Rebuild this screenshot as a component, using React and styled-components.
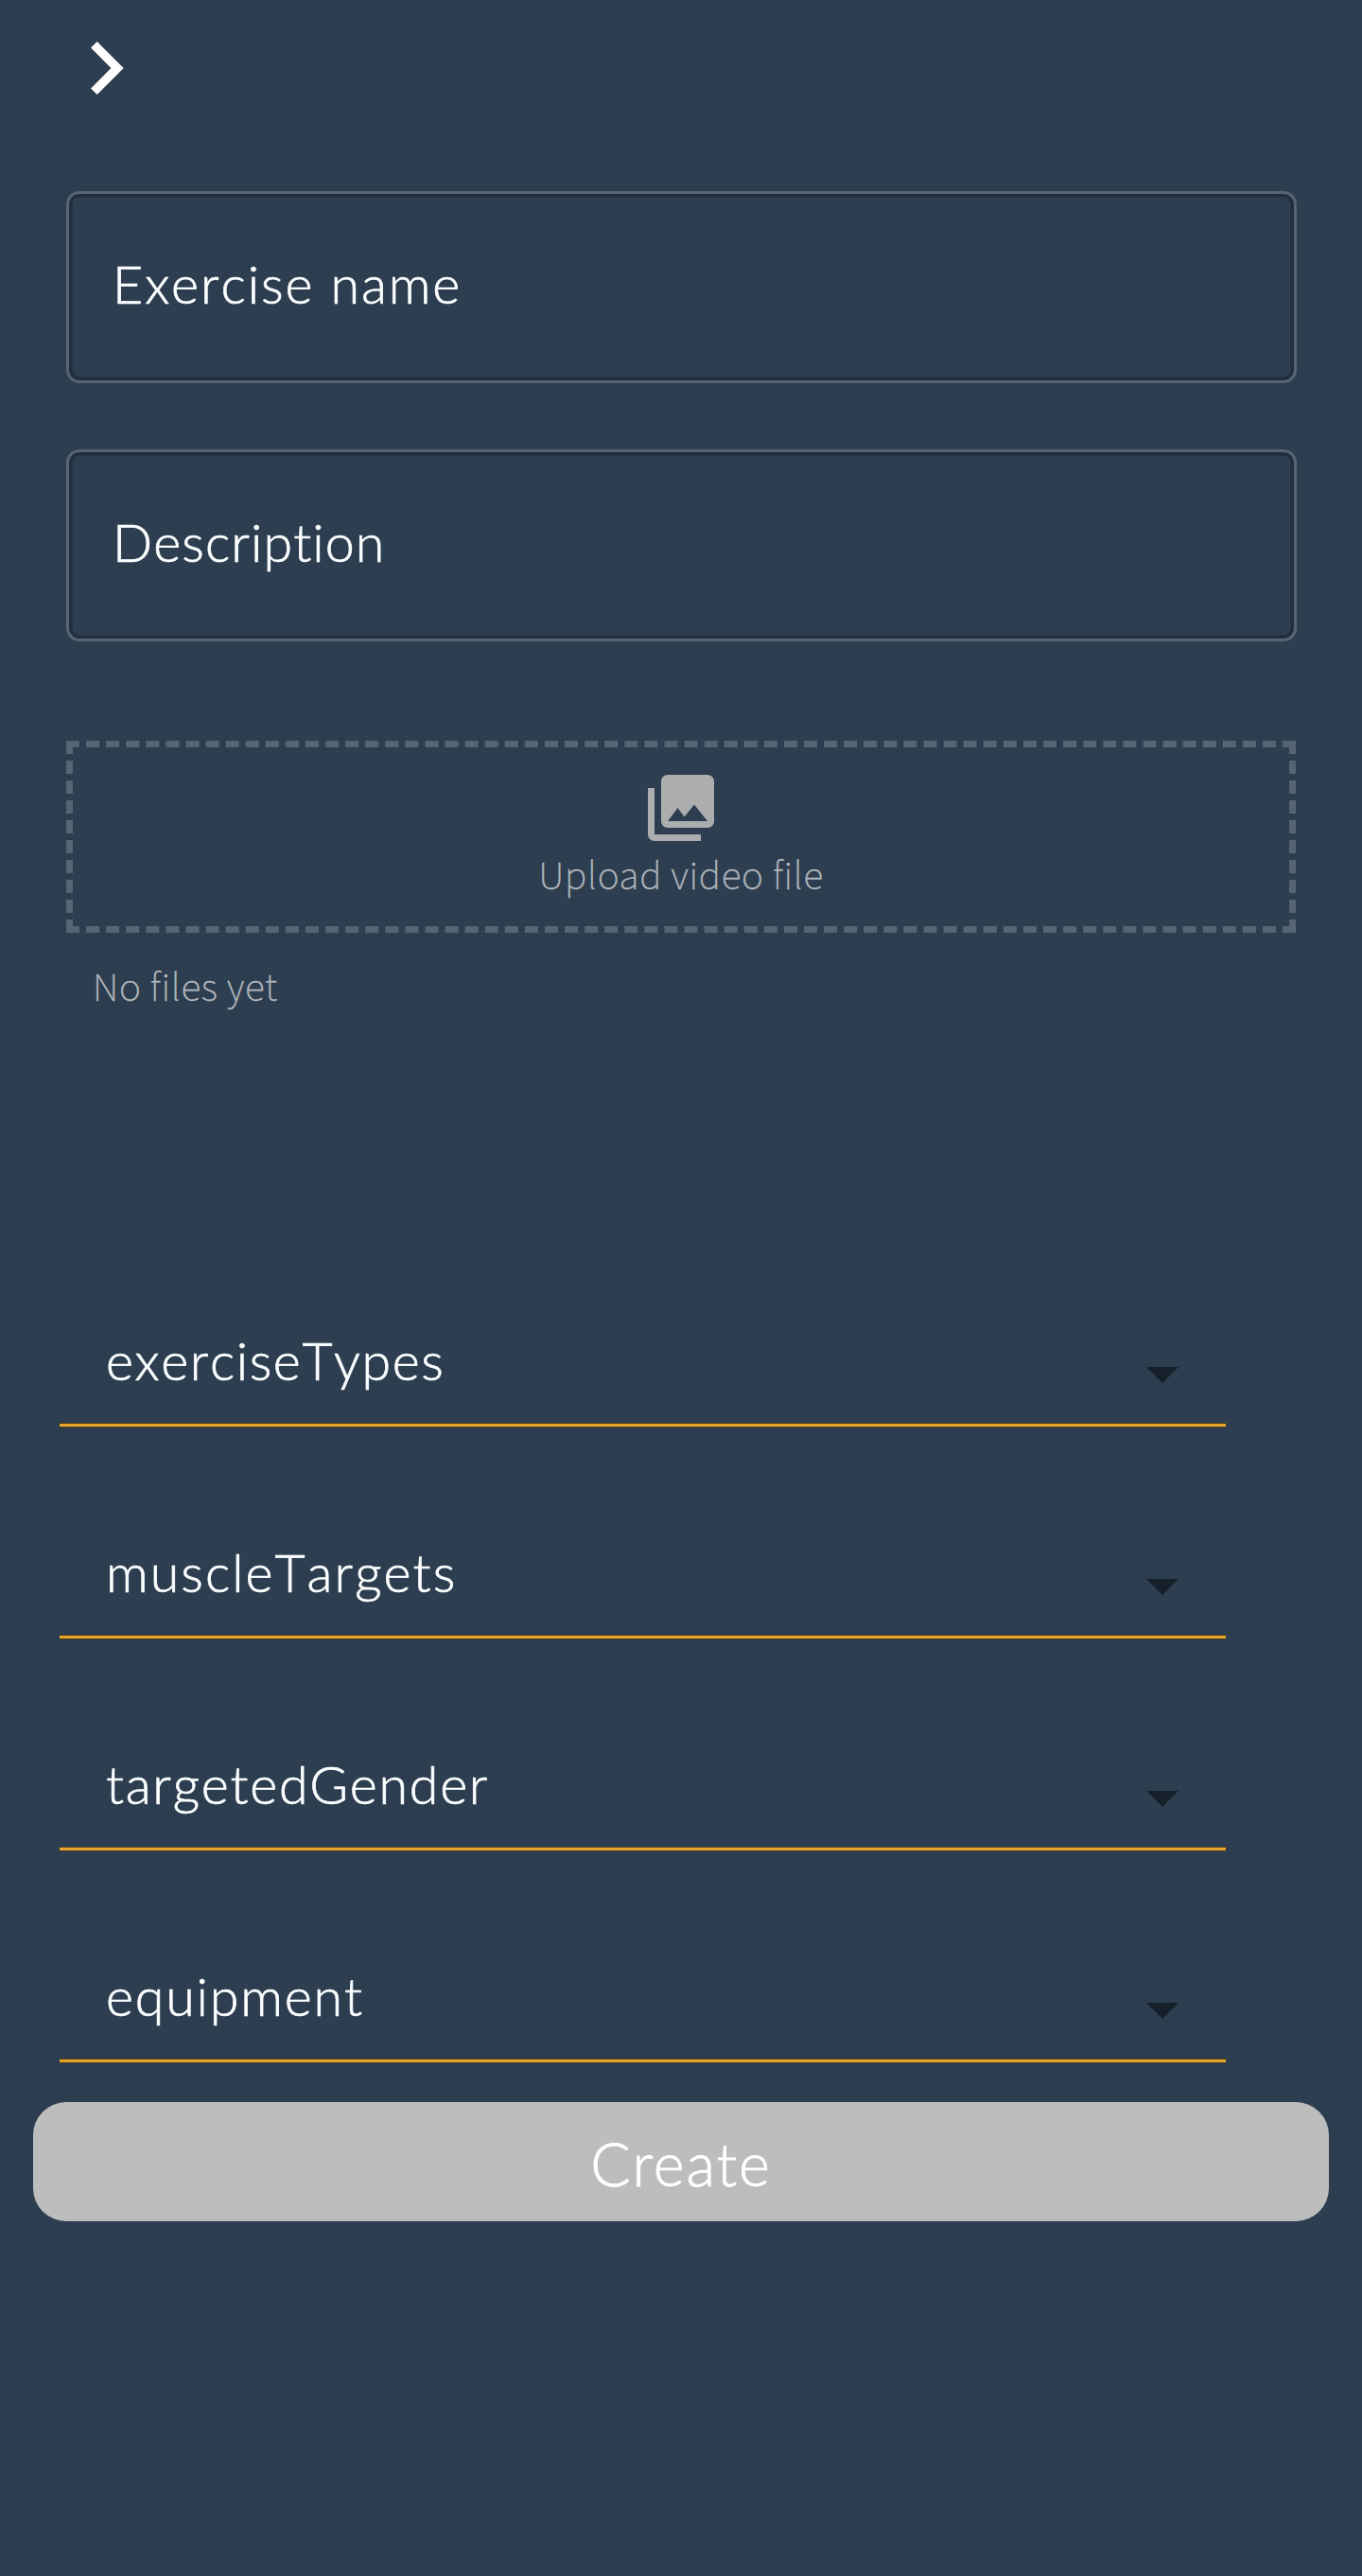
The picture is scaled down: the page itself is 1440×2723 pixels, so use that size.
import React from "react";
import styled, { createGlobalStyle } from "styled-components";

const GlobalStyle = createGlobalStyle`
  *, *::before, *::after { box-sizing: border-box; }
  body {
    margin: 0;
    background: #2d3e50;
  }
`;

const Page = styled.main`
  display: flex;
  flex-direction: column;
  width: 1440px;
  height: 2723px;
  padding: 16px 35px 0;
  background: #2d3e50;
  color: #fcffff;
  font-family: Lato, "Liberation Sans", sans-serif;
  font-weight: 300;
`;

const BackButton = styled.button`
  width: 112px;
  height: 112px;
  margin: 0 0 74px 21px;
  padding: 0;
  border: 0;
  background: none;
  color: #ffffff;

  svg {
    display: block;
    width: 112px;
    height: 112px;
    fill: currentColor;
  }
`;

const Fields = styled.section`
  display: flex;
  flex-direction: column;
  gap: 70px;
  width: 1301px;
  margin-left: 35px;
`;

const Field = styled.label`
  display: flex;
  align-items: center;
  height: 203px;
  padding: 0 0 8px 46px;
  border: 3px solid #566573;
  border-radius: 14px;
  box-shadow: inset 0 0 0 3.5px #212f3d;
`;

const Label = styled.span`
  font-size: 55.5px;
  line-height: 68px;
  white-space: nowrap;
  font-kerning: none;
  -webkit-text-stroke: 0.7px currentColor;
  letter-spacing: ${({ $spacing }) => $spacing}px;
`;

const DropZone = styled.section`
  display: flex;
  flex-direction: column;
  align-items: center;
  width: 1300px;
  height: 203px;
  margin: 105px 0 0 35px;
  padding-top: 22px;
  border: 7px dashed #566573;
  color: #abadaf;

  svg {
    width: 84px;
    height: 84px;
    fill: currentColor;
  }
`;

const Caption = styled.span`
  margin-top: -3px;
  color: #b3b8bd;
  font-family: "Noto Sans CJK SC", "Noto Sans", sans-serif;
  font-size: 39px;
  font-weight: 100;
  line-height: 60px;
  -webkit-text-stroke: 0.5px currentColor;
  letter-spacing: ${({ $spacing }) => $spacing}px;
  white-space: nowrap;
`;

const FileStatus = styled.div`
  display: flex;
  height: 60px;
  margin: 28px 0 0 63px;
`;

const Selects = styled.section`
  display: flex;
  flex-direction: column;
  gap: 120px;
  width: 1233px;
  margin: 330px 0 0 28px;
`;

const Select = styled.div`
  display: flex;
  align-items: flex-start;
  justify-content: space-between;
  height: 104px;
  padding: 0 50px 0 49px;
  border-bottom: 3px solid #e6a52c;
  box-shadow: 0 1px 0 #4b3c20, inset 0 -1px 0 #4b3c20;
`;

const Caret = styled.span`
  margin-top: 41px;
  border: solid transparent;
  border-width: 17.5px 17.5px 0;
  border-top-color: #15202a;
`;

const CreateButton = styled.button`
  height: 126px;
  margin-top: 42px;
  padding: 4px 0 0;
  border: 0;
  border-radius: 35px;
  background: #bdbdbd;
  color: #ffffff;
  font: 300 63px/76px Lato, "Liberation Sans", sans-serif;
  letter-spacing: 1.9px;
  -webkit-text-stroke: 0.8px currentColor;
`;

const fields = [
  { text: "Exercise name", spacing: 1.95 },
  { text: "Description", spacing: 1.1 },
];

const selects = [
  { text: "exerciseTypes", spacing: 1.6 },
  { text: "muscleTargets", spacing: 2.05 },
  { text: "targetedGender", spacing: 1.75 },
  { text: "equipment", spacing: 1.85 },
];

export default function App() {
  return (
    <>
      <GlobalStyle />
      <Page>
        <BackButton aria-label="Back">
          <svg viewBox="0 0 24 24">
            <path d="M10 6L8.59 7.41 13.17 12l-4.58 4.59L10 18l6-6z" />
          </svg>
        </BackButton>
        <Fields>
          {fields.map(({ text, spacing }) => (
            <Field key={text}>
              <Label $spacing={spacing}>{text}</Label>
            </Field>
          ))}
        </Fields>
        <DropZone>
          <svg viewBox="0 0 24 24">
            <path d="M22 16V4c0-1.1-.9-2-2-2H8c-1.1 0-2 .9-2 2v12c0 1.1.9 2 2 2h12c1.1 0 2-.9 2-2zm-11-4l2.03 2.71L16 11l4 5H8l3-4zM2 6v14c0 1.1.9 2 2 2h14v-2H4V6H2z" />
          </svg>
          <Caption $spacing={0.75}>Upload video file</Caption>
        </DropZone>
        <FileStatus>
          <Caption $spacing={0.75}>No files yet</Caption>
        </FileStatus>
        <Selects>
          {selects.map(({ text, spacing }) => (
            <Select key={text}>
              <Label $spacing={spacing}>{text}</Label>
              <Caret />
            </Select>
          ))}
        </Selects>
        <CreateButton>Create</CreateButton>
      </Page>
    </>
  );
}
